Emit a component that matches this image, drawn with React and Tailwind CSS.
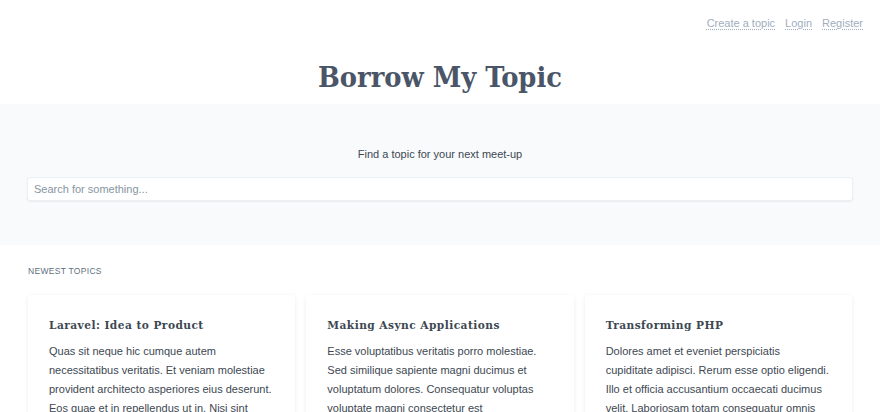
import React from "react";

const topics = [
  {
    title: "Laravel: Idea to Product",
    body: "Quas sit neque hic cumque autem necessitatibus veritatis. Et veniam molestiae provident architecto asperiores eius deserunt. Eos quae et in repellendus ut in. Nisi sint explicabo corporis quia iusto dolores.",
  },
  {
    title: "Making Async Applications",
    body: "Esse voluptatibus veritatis porro molestiae. Sed similique sapiente magni ducimus et voluptatum dolores. Consequatur voluptas voluptate magni consectetur est necessitatibus dolor. Eos voluptas dolorem.",
  },
  {
    title: "Transforming PHP",
    body: "Dolores amet et eveniet perspiciatis cupiditate adipisci. Rerum esse optio eligendi. Illo et officia accusantium occaecati ducimus velit. Laboriosam totam consequatur omnis facilis dolorem aliquid.",
  },
];

export default function App() {
  return (
    <div className="min-h-screen bg-white" style={{ fontFamily: '"Liberation Sans", Arial, sans-serif' }}>
      <nav className="flex justify-end gap-[10px] pr-[17px] pt-[15px] h-[45px] text-[11px] text-[#a0aec0]">
        <a className="underline decoration-dotted underline-offset-2">Create a topic</a>
        <a className="underline decoration-dotted underline-offset-2">Login</a>
        <a className="underline decoration-dotted underline-offset-2">Register</a>
      </nav>
      <div className="h-[59px] pt-[12px]">
        <h1
          className="text-center text-[28.7px] leading-[40px] font-bold text-[#4a5568] [font-stretch:condensed]"
          style={{ fontFamily: '"DejaVu Serif Condensed", "DejaVu Serif", serif' }}
        >
          Borrow My Topic
        </h1>
      </div>
      <section className="bg-[#f8fafc] h-[141px] px-[27px] pt-[43px]">
        <p className="text-center text-[11px] text-[#3d4852] leading-[14px]">Find a topic for your next meet-up</p>
        <input
          className="mt-[16px] w-full h-[24px] bg-white rounded-[3px] border border-[#eceff3] shadow-[0_1px_2px_rgba(0,0,0,0.06)] px-[6px] text-[11px] placeholder:text-[#8795a1] outline-none"
          placeholder="Search for something..."
        />
      </section>
      <section className="px-[28px] pt-[21px]">
        <h2 className="text-[8.5px] uppercase text-[#606f7b] tracking-[0.3px] leading-[10px]">Newest topics</h2>
        <div className="mt-[19px] grid grid-cols-3 gap-[11px]">
          {topics.map((t) => (
            <div key={t.title} className="bg-white rounded-[3px] shadow-[0_1px_4px_rgba(0,0,0,0.08)] pl-[21px] pr-[23px] pt-[22px] pb-[20px]">
              <h3
                className="text-[11.8px] font-bold text-[#3d4852] tracking-[0.45px] leading-[16px] [font-stretch:condensed]"
                style={{ fontFamily: '"DejaVu Serif Condensed", "DejaVu Serif", serif' }}
              >
                {t.title}
              </h3>
              <p className="mt-[9px] text-[11px] leading-[19px] text-[#3d4852]">{t.body}</p>
            </div>
          ))}
        </div>
      </section>
    </div>
  );
}
